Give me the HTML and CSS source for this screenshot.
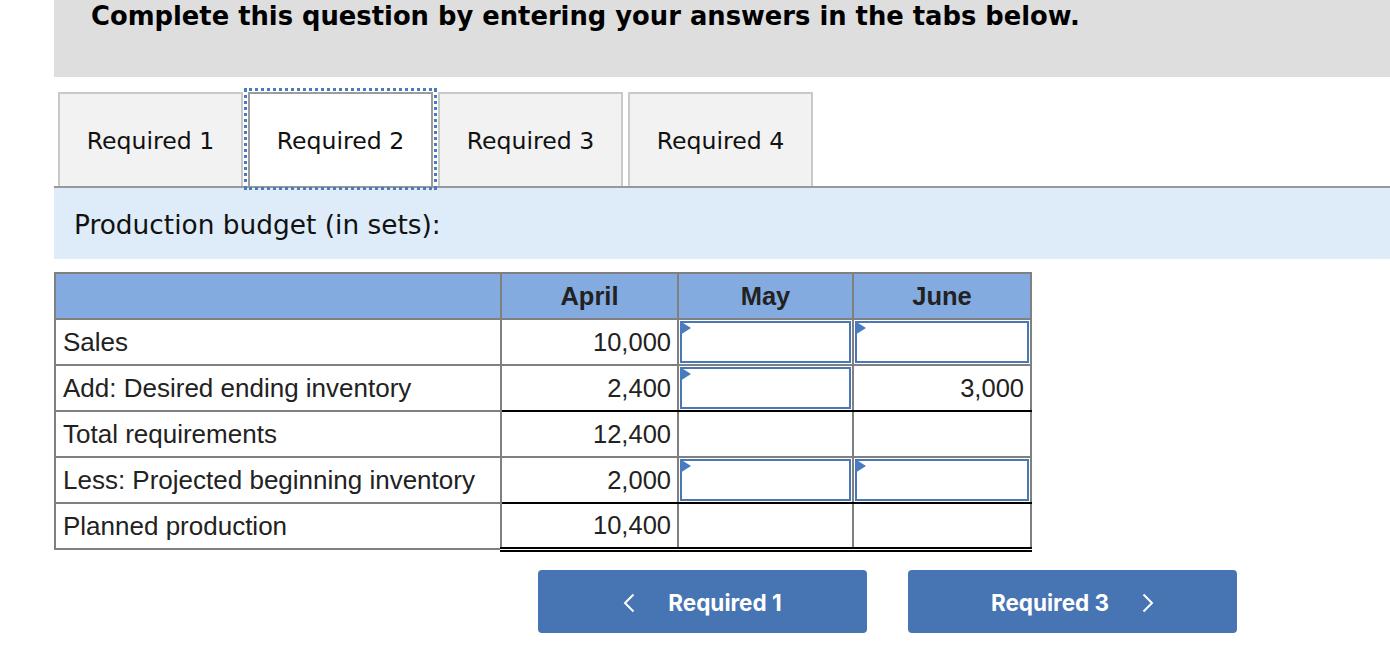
FILE: index.html
```html
<!DOCTYPE html>
<html lang="en">
<head>
<meta charset="utf-8">
<title>Production budget</title>
<link rel="stylesheet" href="styles.css">
</head>
<body>
<div class="page">
  <div class="header">
    <h1 class="title">Complete this question by entering your answers in the tabs below.</h1>
  </div>
  <div class="tabs">
    <div class="tab">Required 1</div>
    <div class="tab active">Required 2</div>
    <div class="tab">Required 3</div>
    <div class="tab">Required 4</div>
  </div>
  <div class="band">
    <p class="band-text">Production budget (in sets):</p>
  </div>
  <table class="budget">
    <colgroup>
      <col class="c-label">
      <col class="c-apr">
      <col class="c-may">
      <col class="c-jun">
    </colgroup>
    <thead>
      <tr>
        <th></th>
        <th>April</th>
        <th>May</th>
        <th>June</th>
      </tr>
    </thead>
    <tbody>
      <tr>
        <td class="label">Sales</td>
        <td class="num">10,000</td>
        <td class="entry"><div class="box"></div><span class="flag"></span></td>
        <td class="entry"><div class="box"></div><span class="flag"></span></td>
      </tr>
      <tr class="sub">
        <td class="label">Add: Desired ending inventory</td>
        <td class="num">2,400</td>
        <td class="entry"><div class="box"></div><span class="flag"></span></td>
        <td class="num">3,000</td>
      </tr>
      <tr>
        <td class="label">Total requirements</td>
        <td class="num">12,400</td>
        <td class="num"></td>
        <td class="num"></td>
      </tr>
      <tr class="sub">
        <td class="label">Less: Projected beginning inventory</td>
        <td class="num">2,000</td>
        <td class="entry"><div class="box"></div><span class="flag"></span></td>
        <td class="entry"><div class="box"></div><span class="flag"></span></td>
      </tr>
      <tr class="total">
        <td class="label">Planned production</td>
        <td class="num">10,400</td>
        <td class="num"></td>
        <td class="num"></td>
      </tr>
    </tbody>
  </table>
  <div class="nav">
    <button class="btn" type="button">
      <svg class="chev" width="12" height="20" viewBox="0 0 12 20"><polyline points="10.5,1.5 2,10 10.5,18.5" fill="none" stroke="#fff" stroke-width="2"/></svg>
      <span>Required 1</span>
    </button>
    <button class="btn" type="button">
      <span>Required 3</span>
      <svg class="chev" width="12" height="20" viewBox="0 0 12 20"><polyline points="1.5,1.5 10,10 1.5,18.5" fill="none" stroke="#fff" stroke-width="2"/></svg>
    </button>
  </div>
</div>
</body>
</html>
```
FILE: styles.css
```css
html, body {
  margin: 0;
  padding: 0;
  background: #ffffff;
}

.page {
  padding-left: 54px;
}

.header {
  background: #dedede;
  height: 77px;
  box-sizing: border-box;
  padding: 1px 0 0 37px;
}

.title {
  margin: 0;
  font: bold 25.8px/30px "DejaVu Sans", Verdana, sans-serif;
  color: #000;
}

.tabs {
  display: flex;
  gap: 5px;
  margin-top: 15px;
  padding-left: 4px;
  border-bottom: 2px solid #999999;
}

.tab {
  width: 185px;
  height: 94px;
  box-sizing: border-box;
  padding-top: 2px;
  border: 2px solid #c9c9c9;
  border-bottom: none;
  background: #f2f2f2;
  display: flex;
  align-items: center;
  justify-content: center;
  font: 23.6px "DejaVu Sans", Verdana, sans-serif;
  color: #111;
}

.tab.active {
  background: #ffffff;
  border-color: #9c9c9c;
  outline: 3px dotted #4a7bbf;
  outline-offset: 1px;
}

.band {
  background: #deebf8;
  height: 71px;
  box-sizing: border-box;
  padding: 2px 0 0 20px;
  display: flex;
  align-items: center;
}

.band-text {
  margin: 0;
  font: 26.4px "DejaVu Sans", Verdana, sans-serif;
  color: #111;
}

.budget {
  margin-top: 13px;
  border-collapse: collapse;
  table-layout: fixed;
  width: 976px;
  font: 26px "Liberation Sans", Arial, sans-serif;
  color: #222;
}

.c-label { width: 446px; }
.c-apr { width: 177px; }
.c-may { width: 175px; }
.c-jun { width: 178px; }

.budget th,
.budget td {
  border: 2px solid #808080;
  height: 46px;
  padding: 0 7px;
  box-sizing: border-box;
}

.budget th {
  background: #83abe0;
  font-size: 25.5px;
  font-weight: bold;
  text-align: center;
}

.budget td.label {
  text-align: left;
}

.budget td.num {
  text-align: right;
  padding-right: 6px;
  font-size: 25.5px;
}

.budget td.entry {
  position: relative;
  padding: 1px;
}

.box {
  height: 42px;
  box-sizing: border-box;
  border: 2px solid #4a78b6;
  background: #fff;
}

.flag {
  position: absolute;
  top: 1px;
  left: 1px;
  width: 0;
  height: 0;
  border-left: 11px solid #4a7bbf;
  border-top: 7px solid transparent;
  border-bottom: 7px solid transparent;
}

.budget tr.sub td.num,
.budget tr.sub td.entry {
  border-bottom: 2px solid #000;
}

.budget tr.total td.num {
  border-bottom: 5px double #000;
}

.nav {
  display: flex;
  gap: 41px;
  margin: 18px 0 0 484px;
}

.btn {
  width: 329px;
  height: 63px;
  border: none;
  border-radius: 4px;
  background: #4774b3;
  color: #fff;
  display: flex;
  align-items: center;
  justify-content: center;
  gap: 33px;
  padding: 3px 0 0;
  font: 700 22.5px Inter, Roboto, "Liberation Sans", sans-serif;
}

.chev {
  display: block;
}
```
